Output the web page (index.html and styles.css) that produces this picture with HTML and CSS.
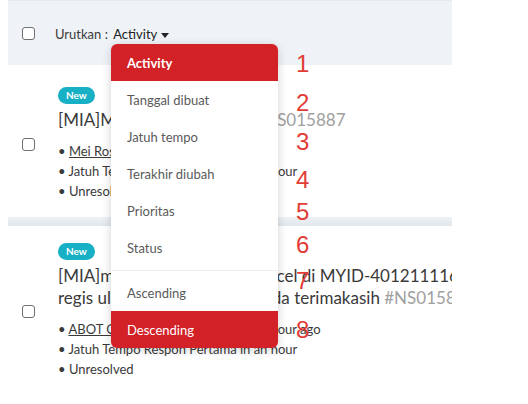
FILE: index.html
```html
<!DOCTYPE html>
<html lang="id">
<head>
<meta charset="utf-8">
<title>Tiket</title>
<link rel="stylesheet" href="styles.css">
</head>
<body>
<div class="page">
  <div class="toolbar">
    <span class="check"></span>
    <div class="sort">Urutkan : <span class="sort-value">Activity</span><span class="caret"></span></div>
  </div>

  <div class="card card-first">
    <span class="check"></span>
    <div class="content">
      <span class="badge">New</span>
      <div class="title">[MIA]Mohon cek pesanan <span class="hash">#NS015887</span></div>
      <ul class="meta">
        <li><span class="name">Mei Rosediana</span> 5 minutes ago</li>
        <li>Jatuh Tempo Respon Pertama in an hour</li>
        <li>Unresolved</li>
      </ul>
    </div>
  </div>
  <div class="sep"></div>
  <div class="card">
    <span class="check"></span>
    <div class="content">
      <span class="badge">New</span>
      <div class="title">[MIA]mohon bantuan utk cancel di MYID-401211116102 karena customer<br>regis ulang, mohon dibantu ada terimakasih <span class="hash">#NS015888</span></div>
      <ul class="meta">
        <li><span class="name">ABOT CORPORATION</span> · updated 1 hour ago</li>
        <li>Jatuh Tempo Respon Pertama in an hour</li>
        <li>Unresolved</li>
      </ul>
    </div>
  </div>

  <div class="menu">
    <div class="menu-group">
      <div class="menu-item active">Activity</div>
      <div class="menu-item">Tanggal dibuat</div>
      <div class="menu-item">Jatuh tempo</div>
      <div class="menu-item">Terakhir diubah</div>
      <div class="menu-item">Prioritas</div>
      <div class="menu-item">Status</div>
    </div>
    <div class="menu-group menu-group-order">
      <div class="menu-item">Ascending</div>
      <div class="menu-item selected">Descending</div>
    </div>
  </div>

  <span class="num n1">1</span>
  <span class="num n2">2</span>
  <span class="num n3">3</span>
  <span class="num n4">4</span>
  <span class="num n5">5</span>
  <span class="num n6">6</span>
  <span class="num n7">7</span>
  <span class="num n8">8</span>
</div>
</body>
</html>
```

FILE: styles.css
```css
* { box-sizing: border-box; }
body {
  margin: 0;
  background: #fff;
  font-family: Lato, "Noto Sans", sans-serif;
  color: #3a3a3a;
}
.page {
  position: relative;
  width: 444px;
  height: 404px;
  margin-left: 8px;
  overflow: hidden;
}
.toolbar {
  height: 65px;
  background: #eff3f7;
  border-top: 1px solid #e6eaee;
  display: flex;
  align-items: center;
  padding-left: 14px;
}
.check {
  flex: none;
  width: 13px;
  height: 13px;
  border: 1.5px solid #6f6f6f;
  border-radius: 3px;
  background: #fff;
}
.sort {
  margin-left: 20px;
  margin-top: 1px;
  font-size: 13px;
  color: #3a3a3a;
}
.sort-value { margin-left: 2px; color: #222; }
.caret {
  display: inline-block;
  margin-left: 4px;
  vertical-align: middle;
  border-left: 4px solid transparent;
  border-right: 4px solid transparent;
  border-top: 5px solid #222;
}
.card {
  display: flex;
  align-items: center;
  padding: 17px 0 16px 14px;
}
.card-first { padding-top: 22px; }
.sep {
  height: 9px;
  background: linear-gradient(#edf1f4, #e1e7eb);
}
.content {
  flex: none;
  width: 640px;
  margin-left: 23px;
}
.badge {
  display: block;
  width: max-content;
  height: 17px;
  line-height: 17px;
  padding: 0 8px;
  border-radius: 9px;
  background: #17b0c5;
  color: #fff;
  font-size: 10px;
  font-weight: 700;
}
.title {
  margin-top: 5px;
  font-size: 17px;
  line-height: 22px;
  white-space: nowrap;
  color: #3a3a3a;
}
.hash { color: #a0a0a0; }
.meta {
  list-style: none;
  margin: 10px 0 0;
  padding: 0;
  font-size: 13px;
  line-height: 20px;
  color: #3a3a3a;
}
.meta li::before { content: "\2022\00a0"; }
.name { text-decoration: underline; }

.menu {
  position: absolute;
  left: 103px;
  top: 44px;
  width: 167px;
  background: #fff;
  border-radius: 6px;
  box-shadow: 0 2px 10px rgba(0, 0, 0, 0.18);
  overflow: hidden;
  font-size: 13px;
  color: #5a5a5a;
}
.menu-group-order {
  margin-top: 4px;
  padding-top: 3px;
  border-top: 1px solid #edf0f2;
}
.menu-item {
  height: 37px;
  display: flex;
  align-items: center;
  padding-left: 16px;
}
.menu-item.active {
  background: #d22127;
  color: #fff;
  font-weight: 700;
}
.menu-item.selected {
  background: #d22127;
  color: #fff;
}

.num {
  position: absolute;
  left: 288px;
  font-family: "Liberation Sans", Arial, sans-serif;
  font-size: 24px;
  line-height: 24px;
  color: #e23c37;
}
.n1 { top: 52px; }
.n2 { top: 91px; }
.n3 { top: 130px; }
.n4 { top: 168px; }
.n5 { top: 200px; }
.n6 { top: 233px; }
.n7 { top: 269px; }
.n8 { top: 318px; }
```
